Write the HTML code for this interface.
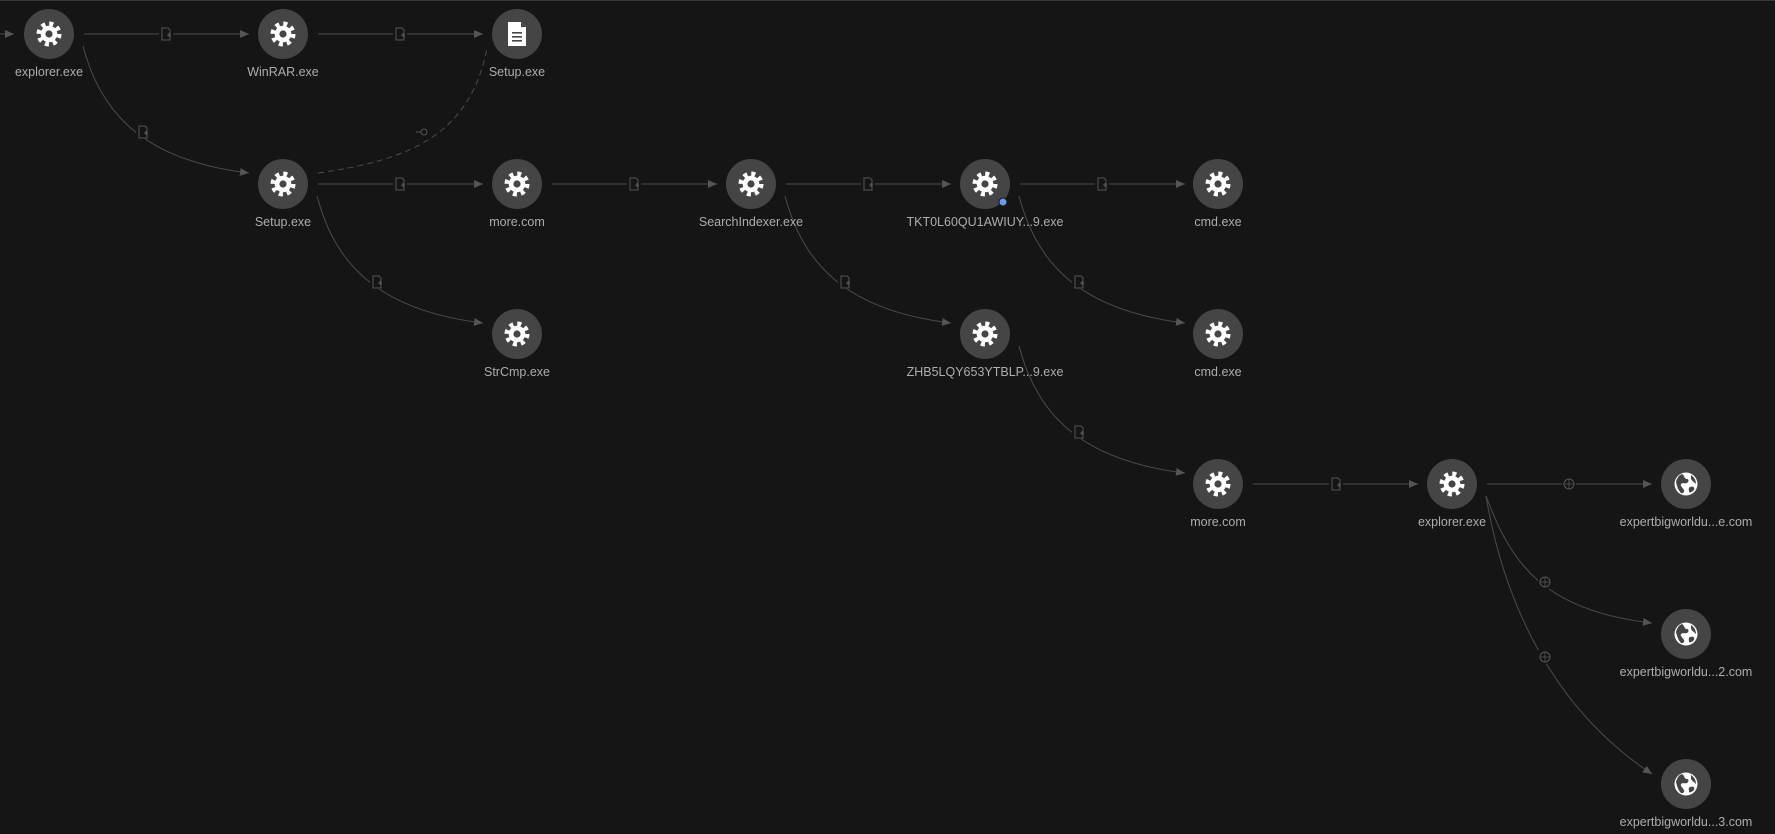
<!DOCTYPE html>
<html><head><meta charset="utf-8"><style>
html,body{margin:0;padding:0;background:#151515;width:1775px;height:834px;overflow:hidden}
svg{display:block}
text{font-family:"Liberation Sans",sans-serif;font-size:12.5px;fill:#adadad;text-anchor:middle}
</style></head><body>
<svg width="1775" height="834" viewBox="0 0 1775 834">
<defs>
<marker id="ar" markerWidth="10" markerHeight="10" refX="9" refY="5" orient="auto" markerUnits="userSpaceOnUse"><path d="M0,1 L9,5 L0,9 Z" fill="#555"/></marker>
<g id="gear">
<circle r="10" fill="none" stroke="#fff" stroke-width="5" stroke-dasharray="3.9 3.95"/>
<circle r="8.3" fill="#fff"/>
<circle r="3.6" fill="#454545"/>
</g>
<g id="globe">
<circle r="11.5" fill="#fff"/>
<path d="M-4,-10 C-1,-8 -2,-5 1,-5 C3,-5 3,-2 1,-1 C-1,0 -3,-2 -5,0 C-6,2 -3,4 -2,6 C-1,8 -4,10 -5,9 C-8,6 -9,2 -10,-2 C-9,-6 -7,-9 -4,-10 Z M5,-9 C8,-7 10,-4 10,0 C8,-2 6,-3 5,-5 Z M4,3 C7,2 9,3 8,6 C6,8 4,9 3,8 C3,6 2,4 4,3 Z" fill="#454545"/>
</g>
<g id="fileic">
<path d="M-9,-12 H4 L9,-7 V12 H-9 Z" fill="#fff"/>
<path d="M4,-12 V-7 H9" fill="#454545"/>
<rect x="-5" y="-2" width="10" height="1.6" fill="#454545"/>
<rect x="-5" y="2" width="10" height="1.6" fill="#454545"/>
<rect x="-5" y="6" width="10" height="1.6" fill="#454545"/>
</g>
<g id="fi"><rect x="-7" y="-7" width="14" height="14" fill="#151515"/><path d="M-4,-6 H2 L4,-4 V6 H-4 Z" fill="none" stroke="#555" stroke-width="1"/><path d="M1,1 H5 M3,-1 V3" stroke="#555" stroke-width="1"/></g>
<g id="ni"><rect x="-7" y="-7" width="14" height="14" fill="#151515"/><circle r="5" fill="none" stroke="#555" stroke-width="1"/><path d="M-5,0 H5 M0,-5 V5" stroke="#555" stroke-width="0.8"/></g>
</defs>
<rect x="0" y="0" width="1775" height="1" fill="#3a3a3a"/>
<g stroke="#4c4c4c" stroke-width="1" fill="none">
<path d="M0,34 H14" marker-end="url(#ar)"/>
<path d="M84,34 H249" marker-end="url(#ar)"/>
<path d="M318,34 H483" marker-end="url(#ar)"/>
<path d="M318,184 H483" marker-end="url(#ar)"/>
<path d="M552,184 H717" marker-end="url(#ar)"/>
<path d="M786,184 H951" marker-end="url(#ar)"/>
<path d="M1020,184 H1185" marker-end="url(#ar)"/>
<path d="M1253,484 H1418" marker-end="url(#ar)"/>
<path d="M1487,484 H1652" marker-end="url(#ar)"/>
<path d="M83,46 C100,110 140,160 249,173" marker-end="url(#ar)"/>
<path d="M317,196 C334,260 374,310 483,323" marker-end="url(#ar)"/>
<path d="M785,196 C802,260 842,310 951,323" marker-end="url(#ar)"/>
<path d="M1019,196 C1036,260 1076,310 1185,323" marker-end="url(#ar)"/>
<path d="M1019,346 C1036,410 1076,460 1185,473" marker-end="url(#ar)"/>
<path d="M1486,496 C1510,560 1540,610 1652,623" marker-end="url(#ar)"/>
<path d="M1486,496 C1500,580 1540,700 1652,774" marker-end="url(#ar)"/>
<path d="M318,173 C410,160 470,135 487,48" stroke-dasharray="6 4"/>
</g>
<use href="#fi" x="166" y="34"/><use href="#fi" x="400" y="34"/>
<use href="#fi" x="400" y="184"/><use href="#fi" x="634" y="184"/>
<use href="#fi" x="868" y="184"/><use href="#fi" x="1102" y="184"/>
<use href="#fi" x="1336" y="484"/>
<use href="#fi" x="143" y="132"/><use href="#fi" x="377" y="282"/>
<use href="#fi" x="845" y="282"/><use href="#fi" x="1079" y="282"/>
<use href="#fi" x="1079" y="432"/>
<use href="#ni" x="1569" y="484"/><use href="#ni" x="1545" y="582"/><use href="#ni" x="1545" y="657"/>
<g><rect x="415" y="125" width="14" height="14" fill="#151515"/><circle cx="424" cy="132" r="3" fill="none" stroke="#555"/><path d="M416,132 H421" stroke="#555"/></g>
<g fill="#454545">
<circle cx="49" cy="34" r="25"/><circle cx="283" cy="34" r="25"/><circle cx="517" cy="34" r="25"/>
<circle cx="283" cy="184" r="25"/><circle cx="517" cy="184" r="25"/><circle cx="751" cy="184" r="25"/>
<circle cx="985" cy="184" r="25"/><circle cx="1218" cy="184" r="25"/>
<circle cx="517" cy="334" r="25"/><circle cx="985" cy="334" r="25"/><circle cx="1218" cy="334" r="25"/>
<circle cx="1218" cy="484" r="25"/><circle cx="1452" cy="484" r="25"/>
<circle cx="1686" cy="484" r="25"/><circle cx="1686" cy="634" r="25"/><circle cx="1686" cy="784" r="25"/>
</g>
<use href="#gear" x="49" y="34"/><use href="#gear" x="283" y="34"/><use href="#fileic" x="517" y="34"/>
<use href="#gear" x="283" y="184"/><use href="#gear" x="517" y="184"/><use href="#gear" x="751" y="184"/>
<use href="#gear" x="985" y="184"/><use href="#gear" x="1218" y="184"/>
<use href="#gear" x="517" y="334"/><use href="#gear" x="985" y="334"/><use href="#gear" x="1218" y="334"/>
<use href="#gear" x="1218" y="484"/><use href="#gear" x="1452" y="484"/>
<use href="#globe" x="1686" y="484"/><use href="#globe" x="1686" y="634"/><use href="#globe" x="1686" y="784"/>
<circle cx="1003" cy="202" r="4" fill="#6a9af0" stroke="#151515" stroke-width="1"/>
<text x="49" y="76">explorer.exe</text>
<text x="283" y="76">WinRAR.exe</text>
<text x="517" y="76">Setup.exe</text>
<text x="283" y="226">Setup.exe</text>
<text x="517" y="226">more.com</text>
<text x="751" y="226">SearchIndexer.exe</text>
<text x="985" y="226">TKT0L60QU1AWIUY...9.exe</text>
<text x="1218" y="226">cmd.exe</text>
<text x="517" y="376">StrCmp.exe</text>
<text x="985" y="376">ZHB5LQY653YTBLP...9.exe</text>
<text x="1218" y="376">cmd.exe</text>
<text x="1218" y="526">more.com</text>
<text x="1452" y="526">explorer.exe</text>
<text x="1686" y="526">expertbigworldu...e.com</text>
<text x="1686" y="676">expertbigworldu...2.com</text>
<text x="1686" y="826">expertbigworldu...3.com</text>
</svg>
</body></html>
